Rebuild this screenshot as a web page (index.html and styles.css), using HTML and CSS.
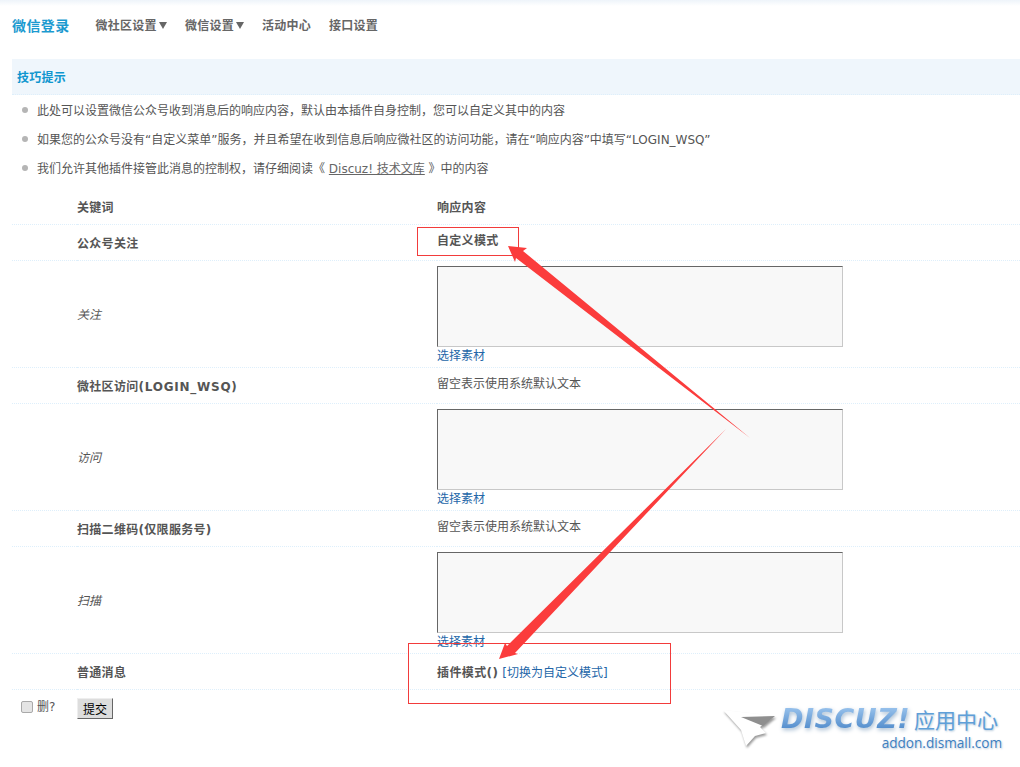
FILE: index.html
```html
<!DOCTYPE html>
<html lang="zh-CN">
<head>
<meta charset="utf-8">
<title>微信登录</title>
<link rel="stylesheet" href="styles.css">
</head>
<body>
<div class="topfade"></div>
<main class="page">
  <nav class="nav">
    <h1 class="nav-title">微信登录</h1>
    <ul class="nav-menu">
      <li class="nav-item">微社区设置<span class="caret"></span></li>
      <li class="nav-item">微信设置<span class="caret"></span></li>
      <li class="nav-item">活动中心</li>
      <li class="nav-item">接口设置</li>
    </ul>
  </nav>
  <section class="tips">
    <h2 class="tips-title">技巧提示</h2>
    <ul class="tips-list">
      <li>此处可以设置微信公众号收到消息后的响应内容，默认由本插件自身控制，您可以自定义其中的内容</li>
      <li>如果您的公众号没有“自定义菜单”服务，并且希望在收到信息后响应微社区的访问功能，请在“响应内容”中填写“LOGIN_WSQ”</li>
      <li>我们允许其他插件接管此消息的控制权，请仔细阅读《 <a class="doc-link" href="#">Discuz! 技术文库</a> 》中的内容</li>
    </ul>
  </section>
  <table class="grid">
    <colgroup><col class="c1"><col class="c2"><col></colgroup>
    <tr class="row head"><td></td><th>关键词</th><th>响应内容</th></tr>
    <tr class="row"><td></td><th>公众号关注</th><th class="mode">自定义模式</th></tr>
    <tr class="row tall"><td></td><td class="sub">关注</td><td class="field"><textarea class="box"></textarea><a class="pick" href="#">选择素材</a></td></tr>
    <tr class="row"><td></td><th>微社区访问<span class="latin">(LOGIN_WSQ)</span></th><td class="hint">留空表示使用系统默认文本</td></tr>
    <tr class="row tall"><td></td><td class="sub">访问</td><td class="field"><textarea class="box"></textarea><a class="pick" href="#">选择素材</a></td></tr>
    <tr class="row"><td></td><th>扫描二维码(仅限服务号)</th><td class="hint">留空表示使用系统默认文本</td></tr>
    <tr class="row tall"><td></td><td class="sub">扫描</td><td class="field"><textarea class="box"></textarea><a class="pick" href="#">选择素材</a></td></tr>
    <tr class="row"><td></td><th>普通消息</th><td class="plugin"><b class="plugin-name">插件模式()</b> <a class="pick" href="#">[切换为自定义模式]</a></td></tr>
    <tr class="foot"><td class="foot-del"><label class="del"><input class="check" type="checkbox">删?</label></td><td class="foot-btn" colspan="2"><button class="submit" type="button">提交</button></td></tr>
  </table>
</main>

<svg class="marks" width="1020" height="767" viewBox="0 0 1020 767" aria-hidden="true">
  <rect x="417.5" y="227.5" width="101" height="28" fill="none" stroke="#f23b3b"/>
  <rect x="408.5" y="643.5" width="262" height="60" fill="none" stroke="#f23b3b"/>
  <path d="M508 246 L527 248 L523 251 L750 438 L516 258 L515 262 Z" fill="#fb3c3c"/>
  <path d="M499 659 L505 643 L507 646 L726 429 L515 653 L518 654 Z" fill="#fb3c3c"/>
</svg>

<aside class="logo">
  <svg class="logo-arrow" width="56" height="46" viewBox="0 0 56 46" aria-hidden="true">
    <path d="M1 4 L53 10 L38 21 L44 27 L33 30 L24 40 L19 24 Z" fill="#fff"/>
    <path d="M19 11 L53 10 L41 20 Z" fill="#8f8f8f"/>
  </svg>
  <div class="logo-text">
    <div class="logo-top"><span class="logo-name">DISCUZ!</span><span class="logo-cn">应用中心</span></div>
    <div class="logo-url">addon.dismall.com</div>
  </div>
</aside>
</body>
</html>
```
FILE: styles.css
```css
* { box-sizing: border-box; }
html, body { margin: 0; padding: 0; }
body {
  position: relative;
  width: 1020px;
  height: 767px;
  overflow: hidden;
  background: #fff;
  color: #555;
  font: 12px/18px "DejaVu Sans", "Noto Sans CJK SC", sans-serif;
}
a { color: #2366a8; text-decoration: none; }
.topfade { height: 6px; background: linear-gradient(#eef4fa, #fff); }
.page { padding-left: 12px; }

.nav { display: flex; align-items: center; height: 39px; }
.nav-title { margin: 0 26px 0 0; font-size: 14px; font-weight: 700; letter-spacing: .4px; color: #1b9ad0; }
.nav-menu { display: flex; gap: 18px; margin: 0; padding: 0; list-style: none; }
.nav-item { display: flex; align-items: center; font-weight: 700; letter-spacing: .25px; color: #666; }
.caret {
  width: 0; height: 0; margin-left: 2px;
  border: 4px solid transparent;
  border-top: 7px solid #666;
  border-bottom: 0;
}

.tips { margin-top: 14px; }
.tips-title {
  margin: 0; height: 36px; padding-left: 5px;
  font-size: 12px; line-height: 38px; font-weight: 700; letter-spacing: .25px; color: #0f96cf;
  background: #eff6fc;
  border-bottom: 1px dotted #deeffb;
}
.tips-list { margin: 0; padding: 2px 0 0 25px; list-style: none; height: 95px; }
.tips-list li { position: relative; height: 29px; line-height: 29px; color: #555; }
.tips-list li::before {
  content: ""; position: absolute; left: -15px; top: 10px;
  width: 6px; height: 6px; border-radius: 50%; background: #b5b5b5;
}
.doc-link { color: #666; text-decoration: underline; }

.grid { width: 1008px; border-collapse: collapse; table-layout: fixed; }
.c1 { width: 65px; }
.c2 { width: 360px; }
.grid th { text-align: left; font-weight: 700; letter-spacing: .3px; color: #555; padding: 4px 0 0; }
.grid td { padding: 0; vertical-align: middle; }
.grid th.mode { padding: 0 0 2px; }
.grid .head th { padding-top: 2px; }
.latin { letter-spacing: .75px; }
.row { height: 36px; border-bottom: 1px dotted #deeffb; }
.row.head { height: 34px; }
.row.tall { height: 107px; }
.grid td.sub { padding-top: 2px; font-style: italic; font-size: 12px; color: #555; }
.grid td.field { vertical-align: top; padding-top: 5px; }
.grid td.hint { padding-bottom: 2px; }
.grid td.plugin { padding-top: 4px; }
.plugin-name { letter-spacing: .4px; }
.box {
  display: block; width: 406px; height: 81px; margin: 0; padding: 0;
  background: #f8f8f8; border: 1px solid; border-color: #666 #c8c8c8 #c8c8c8 #666; resize: none;
}
.pick { line-height: 17px; }
.foot { height: 32px; }
.grid td.foot-del, .grid td.foot-btn { vertical-align: top; }
.grid td.foot-btn { padding-top: 8px; }
.grid td.foot-del { padding-top: 8px; }
.del { display: flex; align-items: center; gap: 4px; padding-left: 9px; height: 18px; color: #555; }
.check {
  appearance: none; width: 12px; height: 12px; margin: 0;
  background: #e4e4e4; border: 1px solid #a9a9a9; border-radius: 2px;
}
.submit {
  display: block; width: 36px; height: 21px; padding: 0;
  font: 12px "DejaVu Sans", "Noto Sans CJK SC", sans-serif; color: #000;
  background: #ddd; border: 1px solid; border-color: #eee #666 #666 #eee;
}

.marks { position: absolute; left: 0; top: 0; pointer-events: none; }

.logo { position: absolute; left: 722px; top: 706px; display: flex; gap: 3px; }
.logo-arrow { filter: drop-shadow(1px 2px 1px #9a9a9a); }
.logo-text { display: flex; flex-direction: column; align-items: flex-end; width: 221px; }
.logo-top { display: flex; align-items: baseline; gap: 4px; height: 26px; width: 100%; }
.logo-name {
  font: italic 700 27px/26px "DejaVu Sans", sans-serif; letter-spacing: .5px;
  color: transparent;
  background: linear-gradient(#9cc5ee, #4a86c8);
  background-clip: text;
  -webkit-background-clip: text;
  filter: drop-shadow(1px 2px 2px #a7bdd2);
}
.logo-cn { font: 21px/26px "Noto Sans CJK SC", sans-serif; color: #5f9fd8; text-shadow: 1px 1px 2px #b9cbdc; }
.logo-url { margin: 3px 0 0 0; font: 13.6px/16px "Open Sans", sans-serif; color: #3f7fbf; text-shadow: 1px 1px 2px #b9cbdc; }
```
